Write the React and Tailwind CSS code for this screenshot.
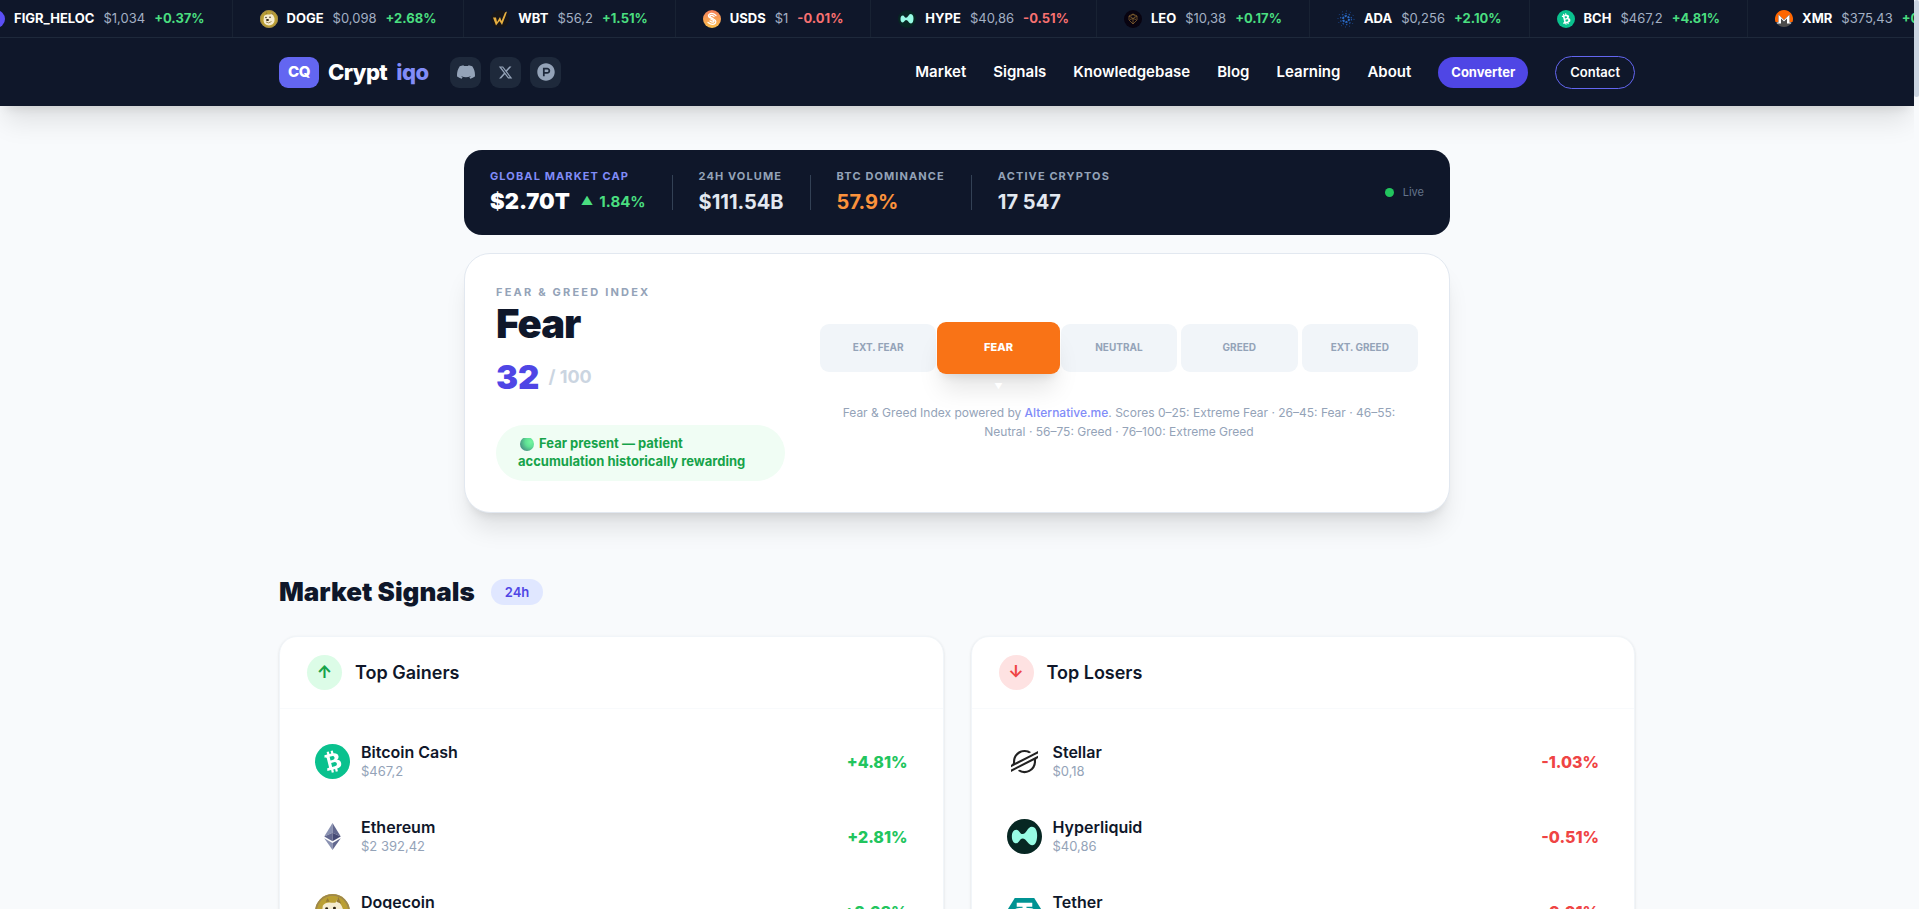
import React from "react";
import { FaProductHunt } from "react-icons/fa";
import { FaXTwitter } from "react-icons/fa6";
import { SiStellar } from "react-icons/si";

const TICKER = [
	{ symbol: "FIGR_HELOC", price: "$1,034", change: "+0.37%", icon: "figr" },
	{ symbol: "DOGE", price: "$0,098", change: "+2.68%", icon: "doge" },
	{ symbol: "WBT", price: "$56,2", change: "+1.51%", icon: "wbt" },
	{ symbol: "USDS", price: "$1", change: "-0.01%", icon: "usds" },
	{ symbol: "HYPE", price: "$40,86", change: "-0.51%", icon: "hype" },
	{ symbol: "LEO", price: "$10,38", change: "+0.17%", icon: "leo" },
	{ symbol: "ADA", price: "$0,256", change: "+2.10%", icon: "ada" },
	{ symbol: "BCH", price: "$467,2", change: "+4.81%", icon: "bch" },
	{ symbol: "XMR", price: "$375,43", change: "+0.84%", icon: "xmr" },
];

const NAV = ["Market", "Signals", "Knowledgebase", "Blog", "Learning", "About"];

const GAINERS = [
	{ name: "Bitcoin Cash", price: "$467,2", change: "+4.81%", icon: "bch" },
	{ name: "Ethereum", price: "$2 392,42", change: "+2.81%", icon: "eth" },
	{ name: "Dogecoin", price: "$0,098", change: "+2.68%", icon: "doge" },
];

const LOSERS = [
	{ name: "Stellar", price: "$0,18", change: "-1.03%", icon: "xlm" },
	{ name: "Hyperliquid", price: "$40,86", change: "-0.51%", icon: "hype" },
	{ name: "Tether", price: "$1", change: "-0.01%", icon: "usdt" },
];

const LEVELS = ["Ext. Fear", "Fear", "Neutral", "Greed", "Ext. Greed"];

const COIN_ART = {
	figr: <circle cx="18" cy="18" r="18" fill="#5b4ff5" />,
	doge: (
		<>
			<circle cx="18" cy="18" r="18" fill="#ba9f33" />
			<circle cx="18" cy="18" r="17" fill="none" stroke="#9c8650" strokeWidth="1.5" />
			<path
				d="M8 12 Q11 8 17 9 L21 9 L24 4 L26 10 Q30 15 29 22 Q27 30 18 31 Q8 30 7 21 Z"
				fill="#f5ecd0"
			/>
			<path d="M22 8 L24 3 L27 10 Z M11 8 L13 4 L15 8 Z" fill="#957a35" />
			<circle cx="12" cy="15" r="1.5" fill="#2b2110" />
			<circle cx="20" cy="14.5" r="1.5" fill="#2b2110" />
			<ellipse cx="15" cy="20" rx="3" ry="2" fill="#2b2110" />
			<path d="M12 24 Q17 28 23 23" fill="none" stroke="#8a7136" strokeWidth="1.5" />
		</>
	),
	wbt: (
		<>
			<circle cx="18" cy="18" r="18" fill="#17161a" />
			<path
				d="M4 15 L10 15 L12 24 L18 14 L21 22 L28 5 L32 3 L29 12 L22 30 L17 22 L10 31 Z"
				fill="#e8b040"
			/>
		</>
	),
	usds: (
		<>
			<defs>
				<linearGradient id="usds" x1="0" y1="0" x2="0" y2="1">
					<stop offset="0" stopColor="#f47e5a" />
					<stop offset="1" stopColor="#fbc04d" />
				</linearGradient>
			</defs>
			<circle cx="18" cy="18" r="18" fill="url(#usds)" />
			<path
				d="M26 11 Q18 4 12 9 Q8 14 18 17 Q28 20 25 26 Q19 32 10 25 M22 13 Q17 9 14 12 Q13 14 20 17 M14 22 Q19 26 22 23 Q23 21 16 19"
				fill="none"
				stroke="#fff"
				strokeWidth="2.5"
				strokeLinecap="round"
			/>
		</>
	),
	hype: (
		<>
			<circle cx="18" cy="18" r="18" fill="#072723" />
			<path
				d="M31 17 C31 22 29.5 27 26 27 C22 27 20 20 16 20 C13 20 12.5 25 9.5 25 C6.5 25 5 22 5 18 C5 14 6.5 11 9.5 11 C13 11 13 15.5 16 15.5 C20 15.5 21 8 25.5 8 C29.5 8 31 12.5 31 17 Z"
				fill="#97fce4"
			/>
		</>
	),
	leo: (
		<>
			<circle cx="18" cy="18" r="18" fill="#080310" />
			<path
				d="M10 12 L18 8 L26 12 L26 20 L18 28 L10 20 Z M10 12 L18 17 L26 12 M12 19 L18 17 L24 19 M18 17 V28 M14 13 L18 8 L22 13"
				fill="none"
				stroke="#8a6530"
				strokeWidth="1.5"
			/>
		</>
	),
	ada: (
		<>
			<circle cx="18" cy="18" r="16" fill="none" stroke="#1d4f9c" strokeWidth="2" strokeDasharray="2 6.3" />
			<circle cx="18" cy="18" r="11" fill="none" stroke="#1f55a5" strokeWidth="2.5" strokeDasharray="3 4" />
			<circle cx="18" cy="18" r="6" fill="none" stroke="#2b6bc6" strokeWidth="4" strokeDasharray="4.2 2" />
		</>
	),
	bch: (
		<>
			<circle cx="18" cy="18" r="18" fill="#0ac18e" />
			<path
				transform="rotate(-14 18 18)"
				d="M11.5 9.8 h3 V7 h2.3 v2.8 h1.9 V7 h2.3 v3 q4.3 .7 4.3 4 q0 2.5 -2.3 3.4 q3.2 .9 3.2 4.1 q0 4.2 -5.2 4.7 V29 h-2.3 v-2.8 h-1.9 V29 h-2.3 v-2.8 h-4 l.5 -2.7 h1.2 q.9 0 .9 -.9 v-9.2 q0 -1.1 -1.3 -1.1 h-.8 z M16.3 12.5 v4 h2.2 q2.5 0 2.5 -2 t-2.5 -2 z M16.3 19.1 v4.3 h2.8 q2.7 0 2.7 -2.2 t-2.7 -2.1 z"
				fill="#fff"
				fillRule="evenodd"
			/>
		</>
	),
	xmr: (
		<>
			<path d="M18 0 A18 18 0 0 1 35 24 H29 V9 L18 20 L7 9 V24 H1 A18 18 0 0 1 18 0 Z" fill="#f60" />
			<path d="M3 26 H12 V17 L18 23 L24 17 V26 H33 A18 18 0 0 1 3 26 Z" fill="#4c4c4c" />
			<path d="M3 25 H7 V9 L18 20 L29 9 V25 H33 L32 27 H24 V17 L18 23 L12 17 V27 H4 Z" fill="#fff" />
		</>
	),
	eth: (
		<>
			<path d="M18 4 L9.5 18 L18 14.2 Z" fill="#8a92b2" />
			<path d="M18 4 L26.5 18 L18 14.2 Z" fill="#62688f" />
			<path d="M9.5 18 L18 23 V14.2 Z" fill="#62688f" />
			<path d="M26.5 18 L18 23 V14.2 Z" fill="#454a75" />
			<path d="M9.5 19.8 L18 24.8 V32 Z" fill="#8a92b2" />
			<path d="M26.5 19.8 L18 24.8 V32 Z" fill="#62688f" />
		</>
	),
	xlm: <SiStellar x="4" y="4" size="28" color="#222" />,
	usdt: (
		<>
			<path d="M8 4 H28 L36 17 L18 34 L0 17 Z" fill="#009393" />
			<path d="M10 9 H26 V13 H20 V16 H16 V13 H10 Z M16 18 H20 V28 H16 Z" fill="#fff" />
			<ellipse cx="18" cy="17" rx="10" ry="2.3" fill="none" stroke="#fff" strokeWidth="1.3" />
		</>
	),
};

function CoinIcon({ name, className }) {
	return (
		<svg viewBox="0 0 36 36" className={className} aria-hidden="true">
			{COIN_ART[name]}
		</svg>
	);
}

function DiscordIcon() {
	return (
		<svg viewBox="0 0 24 24" className="h-[18px] w-[18px]" fill="currentColor" aria-hidden="true">
			<path d="M20.317 4.37a19.791 19.791 0 0 0-4.885-1.515.074.074 0 0 0-.079.037c-.21.375-.444.864-.608 1.25a18.27 18.27 0 0 0-5.487 0 12.64 12.64 0 0 0-.617-1.25.077.077 0 0 0-.079-.037A19.736 19.736 0 0 0 3.677 4.37a.07.07 0 0 0-.032.027C.533 9.046-.32 13.58.099 18.057a.082.082 0 0 0 .031.057 19.9 19.9 0 0 0 5.993 3.03.078.078 0 0 0 .084-.028 14.09 14.09 0 0 0 1.226-1.994.076.076 0 0 0-.041-.106 13.107 13.107 0 0 1-1.872-.892.077.077 0 0 1-.008-.128 10.2 10.2 0 0 0 .372-.292.074.074 0 0 1 .077-.01c3.928 1.793 8.18 1.793 12.062 0a.074.074 0 0 1 .078.01c.12.098.246.198.373.292a.077.077 0 0 1-.006.127 12.299 12.299 0 0 1-1.873.892.077.077 0 0 0-.041.107c.36.698.772 1.362 1.225 1.993a.076.076 0 0 0 .084.028 19.839 19.839 0 0 0 6.002-3.03.077.077 0 0 0 .032-.054c.5-5.177-.838-9.674-3.549-13.66a.061.061 0 0 0-.031-.03z" />
		</svg>
	);
}

function Ticker() {
	return (
		<div className="overflow-hidden border-b border-[#1e293b] bg-[#0f172a]">
			<div className="-ml-10 flex h-[37px] w-max text-[13px]">
				{TICKER.map((coin) => (
					<div
						key={coin.symbol}
						className="flex items-center gap-[9px] border-r border-[#1e293b]/60 px-[27px] whitespace-nowrap"
					>
						<CoinIcon name={coin.icon} className="h-[18px] w-[18px]" />
						<span className="font-bold text-white">{coin.symbol}</span>
						<span className="text-[#a3b0c4]">{coin.price}</span>
						<span
							className={`font-bold ${
								coin.change.startsWith("-") ? "text-[#f87171]" : "text-[#4ade80]"
							}`}
						>
							{coin.change}
						</span>
					</div>
				))}
			</div>
		</div>
	);
}

function SocialLink({ label, children }) {
	return (
		<a
			href="#"
			aria-label={label}
			className="flex h-[31px] w-[31px] items-center justify-center rounded-[9px] bg-[#1e293b] text-[#94a3b8]"
		>
			{children}
		</a>
	);
}

function Header() {
	return (
		<header className="relative z-10 bg-[#0f172a] shadow-xl">
			<Ticker />
			<div className="mx-auto flex h-[68px] max-w-[1408px] items-center justify-between px-[26px]">
				<div className="flex items-center gap-[22px]">
					<a href="#" className="flex items-center gap-[9px]">
						<span className="flex h-[31px] w-10 items-center justify-center rounded-[9px] bg-[#6366f1] text-[15px] font-extrabold tracking-tight text-white">
							CQ
						</span>
						<span className="text-[22px] font-extrabold tracking-tight text-white">
							Crypt
						</span>
						<span className="text-[22px] font-extrabold tracking-tight text-[#818cf8]">
							iqo
						</span>
					</a>
					<div className="flex items-center gap-[9px]">
						<SocialLink label="Discord">
							<DiscordIcon />
						</SocialLink>
						<SocialLink label="X">
							<FaXTwitter size={15} />
						</SocialLink>
						<SocialLink label="Product Hunt">
							<FaProductHunt size={18} />
						</SocialLink>
					</div>
				</div>
				<nav className="flex items-center gap-[27px] text-[15px] font-semibold text-white">
					{NAV.map((item) => (
						<a key={item} href="#">
							{item}
						</a>
					))}
					<a
						href="#"
						className="rounded-full bg-[#4f46e5] px-[13px] py-[6px] text-[13px] leading-[19px] font-bold"
					>
						Converter
					</a>
					<a
						href="#"
						className="rounded-full border border-[#6366f1] px-[14px] py-[6px] text-[13px] leading-[19px]"
					>
						Contact
					</a>
				</nav>
			</div>
		</header>
	);
}

function Stat({ label, labelClass = "text-[#94a3b8]", children }) {
	return (
		<div>
			<div className={`text-[11px] leading-4 font-bold tracking-widest uppercase ${labelClass}`}>
				{label}
			</div>
			<div className="mt-[2px] flex h-8 items-center gap-[11px] text-xl font-bold text-[#e2e8f0]">
				{children}
			</div>
		</div>
	);
}

function Divider() {
	return <div className="h-[35px] w-px bg-[#334155]" />;
}

function GlobalStats() {
	return (
		<section className="flex h-[85px] items-center gap-[26px] rounded-[18px] bg-[#0f172a] px-[26px]">
			<Stat label="Global Market Cap" labelClass="text-[#818cf8]">
				<span className="text-[22px] font-black text-white">$2.70T</span>
				<span className="flex items-center gap-[6px] text-[15px] text-[#4ade80]">
					<span className="text-[12px]">▲</span>
					1.84%
				</span>
			</Stat>
			<Divider />
			<Stat label="24h Volume">$111.54B</Stat>
			<Divider />
			<Stat label="BTC Dominance">
				<span className="text-[#fb923c]">57.9%</span>
			</Stat>
			<Divider />
			<Stat label="Active Cryptos">17 547</Stat>
			<div className="ml-auto flex items-center gap-[9px] text-[11px] text-[#64748b]">
				<span className="h-[9px] w-[9px] rounded-full bg-[#22c55e]" />
				Live
			</div>
		</section>
	);
}

function GreenBall() {
	return (
		<svg viewBox="0 0 14 13" className="mr-[5px] ml-[2px] inline h-[13px] w-[14px]" aria-hidden="true">
			<defs>
				<radialGradient id="ball" cx="0.75" cy="0.35" r="0.8">
					<stop offset="0" stopColor="#74f5a0" />
					<stop offset="0.45" stopColor="#5fe094" />
					<stop offset="1" stopColor="#468f82" />
				</radialGradient>
			</defs>
			<circle cx="7" cy="6" r="7" fill="url(#ball)" />
		</svg>
	);
}

function FearGreed() {
	return (
		<section className="mt-[18px] flex items-center gap-[35px] rounded-[26px] border border-[#e2e8f0] bg-white p-[31px] shadow-xl">
			<div className="w-[289px] shrink-0">
				<div className="text-[11px] leading-[14px] font-bold tracking-[0.2em] text-[#94a3b8] uppercase">
					Fear &amp; Greed Index
				</div>
				<h2 className="mt-[5px] text-[40px] leading-10 font-black tracking-tight text-[#0f172a]">
					Fear
				</h2>
				<div className="mt-[13px] flex items-center gap-[9px]">
					<span className="text-[33px] leading-10 font-black text-[#4f46e5]">32</span>
					<span className="text-lg font-bold text-[#cbd5e1]">/ 100</span>
				</div>
				<p className="mt-7 rounded-[28px] bg-[#f0fdf4] px-[22px] pt-[9px] pb-[11px] text-[13px] leading-[18px] font-bold text-[#16a34a]">
					<GreenBall />
					Fear present — patient accumulation historically rewarding
				</p>
			</div>
			<div className="min-w-0 flex-1 pb-[2px]">
				<div className="flex h-12 items-center gap-1">
					{LEVELS.map((level) =>
						level === "Fear" ? (
							<div
								key={level}
								className="relative z-10 -mx-[3px] flex h-[52px] flex-[1.05] items-center justify-center rounded-[9px] bg-[#f97316] text-[11px] font-extrabold text-white uppercase shadow-xl"
							>
								{level}
								<span className="absolute top-full mt-[8px] text-[8px] leading-none text-white">
									▼
								</span>
							</div>
						) : (
							<div
								key={level}
								className="flex h-12 flex-1 items-center justify-center rounded-[9px] bg-[#f1f5f9] text-[10px] font-bold text-[#94a3b8] uppercase"
							>
								{level}
							</div>
						)
					)}
				</div>
				<p className="mt-[31px] px-4 text-center text-[12px] leading-[19px] text-[#94a3b8]">
					Fear &amp; Greed Index powered by{" "}
					<a href="#" className="font-medium text-[#818cf8]">
						Alternative.me
					</a>
					. Scores 0–25: Extreme Fear · 26–45: Fear · 46–55: Neutral · 56–75: Greed ·
					76–100: Extreme Greed
				</p>
			</div>
		</section>
	);
}

function MoversCard({ title, coins, up }) {
	return (
		<section className="rounded-[18px] border border-[#f1f5f9] bg-white shadow-sm">
			<div className="flex items-center gap-[13px] border-b border-[#f8fafc] px-[27px] py-[18px]">
				<span
					className={`flex h-[35px] w-[35px] items-center justify-center rounded-full text-[17px] font-bold ${
						up ? "bg-[#dcfce7] text-[#16a34a]" : "bg-[#fee2e2] text-[#ef4444]"
					}`}
				>
					{up ? "↑" : "↓"}
				</span>
				<h3 className="text-lg font-semibold text-[#0f172a]">{title}</h3>
			</div>
			<ul className="px-[35px] py-[15px]">
				{coins.map((coin) => (
					<li key={coin.name} className="flex h-[75px] items-center gap-[11px]">
						<CoinIcon name={coin.icon} className="h-[35px] w-[35px]" />
						<div>
							<div className="text-[16px] leading-5 font-semibold text-[#0f172a]">
								{coin.name}
							</div>
							<div className="text-[13px] leading-[19px] text-[#94a3b8]">{coin.price}</div>
						</div>
						<span
							className={`ml-auto text-[16px] font-extrabold ${
								up ? "text-[#22c55e]" : "text-[#ef4444]"
							}`}
						>
							{coin.change}
						</span>
					</li>
				))}
			</ul>
		</section>
	);
}

function App() {
	return (
		<div className="flex h-screen overflow-hidden bg-[#f8fafc] font-['Inter',sans-serif]">
			<div className="min-w-0 flex-1 overflow-hidden">
				<Header />
				<main className="mx-auto max-w-[1408px] px-[26px] pt-11">
					<div className="mx-auto max-w-[986px]">
						<GlobalStats />
						<FearGreed />
					</div>
					<div className="mt-[61px] mb-[26px] flex items-center gap-4">
						<h2 className="text-[26px] leading-9 font-black text-[#0f172a]">
							Market Signals
						</h2>
						<span className="rounded-full bg-[#e0e7ff] px-[14px] py-[4px] text-[13px] leading-[18px] font-semibold text-[#4f46e5]">
							24h
						</span>
					</div>
					<div className="grid grid-cols-2 gap-[27px]">
						<MoversCard title="Top Gainers" coins={GAINERS} up />
						<MoversCard title="Top Losers" coins={LOSERS} />
					</div>
				</main>
			</div>
			<div className="w-[5px] bg-[#f8fafc]">
				<div className="h-[97px] rounded-full bg-[#cbd5e1]" />
			</div>
		</div>
	);
}

export default App;
